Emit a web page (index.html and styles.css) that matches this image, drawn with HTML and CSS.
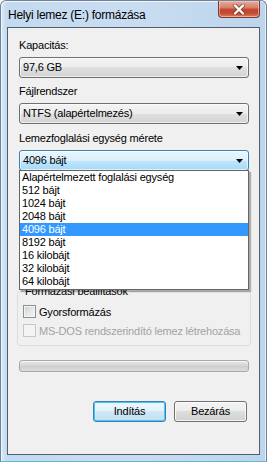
FILE: index.html
```html
<!DOCTYPE html>
<html lang="hu">
<head>
<meta charset="utf-8">
<title>Helyi lemez (E:) formázása</title>
<link rel="stylesheet" href="styles.css">
</head>
<body>
<div class="window">
  <div class="titlebar">
    <span class="title">Helyi lemez (E:) formázása</span>
    <div class="close">
      <svg width="14" height="11" viewBox="0 0 14 11">
        <path d="M3 1.5 L11 9.5 M11 1.5 L3 9.5" stroke="#5a2118" stroke-width="4" stroke-linecap="round" fill="none" opacity="0.55"/>
        <path d="M3 1.5 L11 9.5 M11 1.5 L3 9.5" stroke="#ffffff" stroke-width="2.4" stroke-linecap="round" fill="none"/>
      </svg>
    </div>
  </div>
  <div class="client">
    <div class="field">
      <div class="label">Kapacitás:</div>
      <div class="combo"><span>97,6 GB</span><svg class="arrow" width="7" height="4" viewBox="0 0 7 4"><path d="M0 0H7L3.5 4Z" fill="#000"/></svg></div>
    </div>
    <div class="field">
      <div class="label">Fájlrendszer</div>
      <div class="combo"><span>NTFS (alapértelmezés)</span><svg class="arrow" width="7" height="4" viewBox="0 0 7 4"><path d="M0 0H7L3.5 4Z" fill="#000"/></svg></div>
    </div>
    <div class="field field-open">
      <div class="label">Lemezfoglalási egység mérete</div>
      <div class="combo combo-focus"><span>4096 bájt</span><svg class="arrow" width="7" height="4" viewBox="0 0 7 4"><path d="M0 0H7L3.5 4Z" fill="#000"/></svg></div>
      <ul class="list">
        <li>Alapértelmezett foglalási egység</li>
        <li>512 bájt</li>
        <li>1024 bájt</li>
        <li>2048 bájt</li>
        <li class="selected">4096 bájt</li>
        <li>8192 bájt</li>
        <li>16 kilobájt</li>
        <li>32 kilobájt</li>
        <li>64 kilobájt</li>
      </ul>
    </div>
    <fieldset class="group">
      <legend>Formázási beállítások</legend>
      <div class="check-row"><span class="checkbox"></span><span>Gyorsformázás</span></div>
      <div class="check-row disabled"><span class="checkbox"></span><span>MS-DOS rendszerindító lemez létrehozása</span></div>
    </fieldset>
    <div class="progress"></div>
    <div class="buttons">
      <div class="button default">Indítás</div>
      <div class="button">Bezárás</div>
    </div>
  </div>
</div>
</body>
</html>
```
FILE: styles.css
```css
html, body {
  margin: 0;
  padding: 0;
  background: #ffffff;
}
body {
  font-family: "Liberation Sans", Arial, sans-serif;
  font-size: 11px;
  letter-spacing: -0.2px;
  color: #000;
}
.window {
  box-sizing: border-box;
  width: 267px;
  height: 462px;
  display: flex;
  flex-direction: column;
  padding: 0 6px 6px 6px;
  border: 1px solid #6f8297;
  border-bottom-color: #5fb8dc;
  border-radius: 6px 6px 0 0;
  background: linear-gradient(to right, #d9e8f6 0, #c4daf0 6px, #c9ddf1 50%, #bcd4ec 100%);
  box-shadow: inset 1px 1px 0 #eef5fc, inset -1px 0 0 #e3eef9;
}
.titlebar {
  height: 26px;
  display: flex;
  align-items: flex-start;
  flex-shrink: 0;
}
.title {
  margin: 7px 0 0 1px;
  font-size: 12px;
  line-height: 14px;
  letter-spacing: -0.25px;
  color: #000;
}
.close {
  margin-left: auto;
  width: 42px;
  height: 17px;
  box-sizing: border-box;
  border: 1px solid #7a3a30;
  border-top: none;
  border-radius: 0 0 4px 4px;
  background: linear-gradient(#e9ab9c 0, #d7826c 40%, #c1442b 55%, #c84d32 80%, #d98569 100%);
  box-shadow: inset 0 0 0 1px rgba(255, 220, 210, 0.5);
  display: flex;
  align-items: center;
  justify-content: center;
}
.client {
  flex: 1;
  box-sizing: border-box;
  border: 1px solid #4f5d6c;
  background: #f0f0f0;
  padding: 11px 10px 0 11px;
  display: flex;
  flex-direction: column;
}
.field {
  margin-bottom: 7px;
}
.field-open {
  position: relative;
  margin-top: 1px;
  margin-bottom: 0;
}
.label {
  line-height: 13px;
  margin-bottom: 5px;
}
.combo {
  box-sizing: border-box;
  height: 21px;
  border: 1px solid #707070;
  border-radius: 3px;
  background: linear-gradient(#f4f4f4 0, #ececec 50%, #e0e0e0 50%, #d4d4d4 100%);
  box-shadow: inset 0 0 0 1px rgba(255, 255, 255, 0.6);
  display: flex;
  align-items: center;
  padding: 0 5px 0 3px;
  line-height: 13px;
}
.combo-focus {
  border-color: #3c7fb1;
  background: linear-gradient(#eaf6fd 0, #d9f0fc 50%, #bee6fd 50%, #a7d9f5 100%);
}
.arrow {
  margin-left: auto;
  display: block;
}
.list {
  position: absolute;
  z-index: 2;
  left: 0;
  right: 0;
  top: 38px;
  margin: 0;
  padding: 0 0 1px 0;
  list-style: none;
  background: #ffffff;
  border: 1px solid #646464;
  box-shadow: 2px 2px 1px rgba(0, 0, 0, 0.28);
}
.list li {
  line-height: 13px;
  padding-left: 2px;
  white-space: nowrap;
}
.list li.selected {
  background: #3399ff;
  color: #ffffff;
}
.group {
  margin: 114px -2px 0 -2px;
  padding: 0 5px 7px 5px;
  border: 1px solid #d5dfe5;
  border-radius: 3px;
  min-width: 0;
}
.group legend {
  padding: 0 2px;
  line-height: 13px;
}
.check-row {
  display: flex;
  align-items: center;
  gap: 2px;
  height: 15px;
  margin-top: 6px;
  white-space: nowrap;
}
.check-row + .check-row {
  margin-top: 4px;
}
.checkbox {
  box-sizing: border-box;
  width: 13px;
  height: 13px;
  flex-shrink: 0;
  border: 1px solid #8f8f8f;
  background: linear-gradient(135deg, #c9ccd1 0, #e4e5e7 50%, #f7f7f7 100%);
  box-shadow: inset 0 0 0 1px #f4f4f4;
  margin-right: 1px;
}
.check-row.disabled {
  color: #a3a3a3;
}
.check-row.disabled .checkbox {
  border-color: #c7c7c7;
  background: #f4f4f4;
  box-shadow: none;
}
.progress {
  box-sizing: border-box;
  margin-top: 14px;
  height: 12px;
  border: 1px solid #a9a9a9;
  border-radius: 3px;
  background: linear-gradient(#e8e8e8 0, #d6d6d6 45%, #cfcfcf 55%, #dcdcdc 100%);
  box-shadow: inset 0 1px 0 #f6f6f6;
}
.buttons {
  display: flex;
  justify-content: flex-end;
  gap: 8px;
  margin-top: 29px;
  padding-right: 2px;
}
.button {
  box-sizing: border-box;
  width: 73px;
  height: 21px;
  border: 1px solid #707070;
  border-radius: 3px;
  background: linear-gradient(#f4f4f4 0, #ececec 50%, #dedede 50%, #d0d0d0 100%);
  box-shadow: inset 0 0 0 1px rgba(255, 255, 255, 0.8);
  display: flex;
  align-items: center;
  justify-content: center;
  line-height: 13px;
}
.button.default {
  border-color: #3c7fb1;
  box-shadow: inset 0 0 0 1px #48c7f2;
  background: linear-gradient(#eef8fd 0, #e3f2fb 50%, #cfe8f6 50%, #c2e0f2 100%);
}
```
